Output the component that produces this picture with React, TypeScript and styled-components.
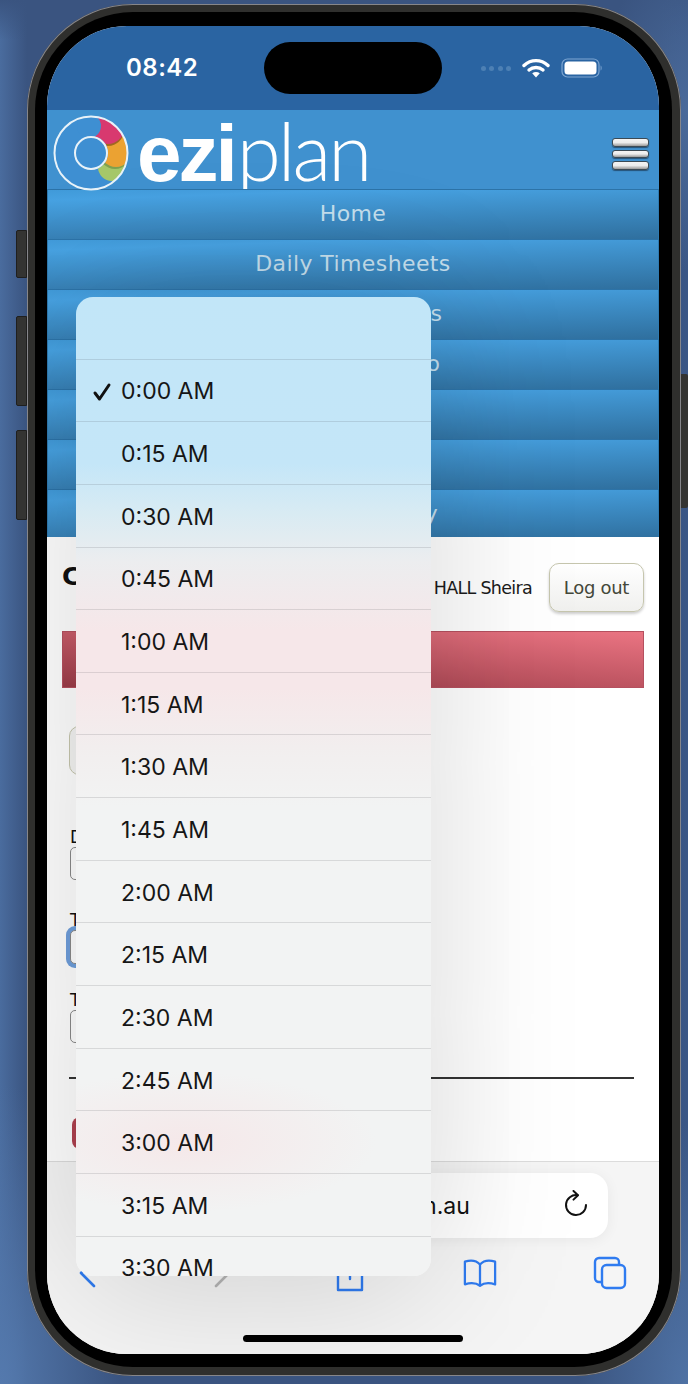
import React from 'react'
import styled, {createGlobalStyle} from 'styled-components'

const navItems = ['Home', 'Daily Timesheets', 'Leave Requests', 'Employees Info', 'Reports', 'Settings', 'Weekly History']

const times = ['0:00 AM', '0:15 AM', '0:30 AM', '0:45 AM', '1:00 AM', '1:15 AM', '1:30 AM', '1:45 AM', '2:00 AM', '2:15 AM', '2:30 AM', '2:45 AM', '3:00 AM', '3:15 AM', '3:30 AM']

const App: React.FC = () => {
    return (
        <Desktop>
            <GlobalStyle />
            <Phone>
                <SideButton $top={226} $height={48} />
                <SideButton $top={312} $height={90} />
                <SideButton $top={426} $height={90} />
                <PowerButton />
                <Bezel>
                    <Screen>
                        <StatusBar>
                            <Clock>08:42</Clock>
                            <StatusIcons>
                                <SignalDots>
                                    <i /><i /><i /><i />
                                </SignalDots>
                                <svg width="28" height="20" viewBox="0 0 28 20">
                                    <path d="M2 7.5C9 1 19 1 26 7.5" fill="none" stroke="#fff" strokeWidth="3.4" strokeLinecap="round" />
                                    <path d="M7 12C11 8.6 17 8.6 21 12" fill="none" stroke="#fff" strokeWidth="3.4" strokeLinecap="round" />
                                    <path d="M10.2 15.2C12.6 13.6 15.4 13.6 17.8 15.2L14 19.4Z" fill="#fff" />
                                </svg>
                                <svg width="42" height="20" viewBox="0 0 42 20">
                                    <rect x="1" y="1" width="37" height="18" rx="5.5" fill="none" stroke="#7ea6d2" strokeWidth="1.2" />
                                    <rect x="3.5" y="3.5" width="32" height="13" rx="3.5" fill="#fff" />
                                    <path d="M39.6 7.5C41 8 41 12 39.6 12.5Z" fill="#7ea6d2" />
                                </svg>
                            </StatusIcons>
                        </StatusBar>
                        <Island />
                        <Header>
                            <Logo width="76" height="76" viewBox="0 0 76 76">
                                <defs>
                                    <clipPath id="ring">
                                        <circle cx="38" cy="38" r="36.5" />
                                    </clipPath>
                                </defs>
                                <circle cx="38" cy="38" r="37" fill="#3e8fd2" />
                                <g clipPath="url(#ring)">
                                    <circle cx="59" cy="52" r="14" fill="#a5c768" />
                                    <circle cx="62" cy="38" r="16" fill="#3a5a20" opacity="0.35" />
                                    <circle cx="63" cy="36" r="16" fill="#eba232" />
                                    <circle cx="55" cy="15" r="16" fill="#5a2a10" opacity="0.5" />
                                    <circle cx="55" cy="13" r="16" fill="#d8396f" />
                                    <circle cx="36" cy="11" r="12" fill="#3e8fd2" />
                                    <circle cx="38" cy="38" r="17" fill="#3e8fd2" />
                                </g>
                                <circle cx="38" cy="38" r="36.5" fill="none" stroke="#e8f2f8" strokeWidth="2" />
                                <circle cx="38" cy="38" r="16" fill="none" stroke="#e8f2f8" strokeWidth="2" />
                            </Logo>
                            <Wordmark>
                                <b>ezi</b><span>plan</span>
                            </Wordmark>
                            <Hamburger>
                                <i /><i /><i />
                            </Hamburger>
                        </Header>
                        <Nav>
                            {navItems.map(item => <NavItem key={item}>{item}</NavItem>)}
                        </Nav>
                        <Page>
                            <TitleRow>
                                <Title>Create Entry</Title>
                                <UserBox>
                                    <UserName>HALL Sheira</UserName>
                                    <LogOut>Log out</LogOut>
                                </UserBox>
                            </TitleRow>
                            <RedBar />
                            <BackButton>Back</BackButton>
                            <Field $top={52}>
                                <FieldLabel>Date</FieldLabel>
                                <Input $height={33} />
                            </Field>
                            <Field $top={30}>
                                <FieldLabel>Time from</FieldLabel>
                                <Input $height={34} $focused />
                            </Field>
                            <Field $top={26}>
                                <FieldLabel>Time to</FieldLabel>
                                <Input $height={33} />
                            </Field>
                            <Rule />
                            <SaveButton>Save</SaveButton>
                        </Page>
                        <Toolbar>
                            <UrlBar>
                                <UrlText>www.eziplan.com.au</UrlText>
                                <Reload width="24" height="28" viewBox="0 0 24 28">
                                    <path d="M13.5 5.2A10 10 0 1 0 22 15" fill="none" stroke="#111" strokeWidth="2" strokeLinecap="round" />
                                    <path d="M9.5 1L14 5.2L9.5 9.6" fill="none" stroke="#111" strokeWidth="2" strokeLinecap="round" strokeLinejoin="round" />
                                </Reload>
                            </UrlBar>
                            <ToolIcons>
                                <ToolSlot $left={23}>
                                    <svg width="20" height="32" viewBox="0 0 20 32">
                                        <path d="M17 3L4 16L17 29" fill="none" stroke="#2f7bf0" strokeWidth="2.6" strokeLinecap="round" strokeLinejoin="round" />
                                    </svg>
                                </ToolSlot>
                                <ToolSlot $left={102}>
                                    <svg width="20" height="32" viewBox="0 0 20 32">
                                        <path d="M3 3L16 16L3 29" fill="none" stroke="#b5b5b5" strokeWidth="2.6" strokeLinecap="round" strokeLinejoin="round" />
                                    </svg>
                                </ToolSlot>
                                <ToolSlot $left={93} $drop={4}>
                                    <svg width="30" height="36" viewBox="0 0 30 36">
                                        <path d="M9 11H3V33H27V11H21M15 22V2M9 7L15 2L21 7" fill="none" stroke="#2f7bf0" strokeWidth="2.4" strokeLinecap="round" strokeLinejoin="round" />
                                    </svg>
                                </ToolSlot>
                                <ToolSlot $left={96}>
                                    <svg width="36" height="30" viewBox="0 0 36 30">
                                        <path d="M18 6C14 1.500 7 1.500 2 3V27C7 25.500 14 25.500 18 28.500C22 25.500 29 25.500 34 27V3C29 1.500 22 1.500 18 6ZM18 6V28.500" fill="none" stroke="#2f7bf0" strokeWidth="2.4" strokeLinejoin="round" />
                                    </svg>
                                </ToolSlot>
                                <ToolSlot $left={96}>
                                    <svg width="34" height="34" viewBox="0 0 34 34">
                                        <path d="M8 26H6A4 4 0 0 1 2 22V6A4 4 0 0 1 6 2H22A4 4 0 0 1 26 6V8" fill="none" stroke="#2f7bf0" strokeWidth="2.4" strokeLinecap="round" />
                                        <rect x="9" y="9" width="23" height="23" rx="4.500" fill="none" stroke="#2f7bf0" strokeWidth="2.4" />
                                    </svg>
                                </ToolSlot>
                            </ToolIcons>
                            <HomeIndicator />
                        </Toolbar>
                        <TimeMenu>
                            <MenuRow />
                            {times.map((time, index) => (
                                <MenuRow key={time}>
                                    {index === 0 && (
                                        <Check width="20" height="20" viewBox="0 0 20 20">
                                            <path d="M3 11L7.500 17L17 3" fill="none" stroke="#111" strokeWidth="3" strokeLinecap="round" strokeLinejoin="round" />
                                        </Check>
                                    )}
                                    {time}
                                </MenuRow>
                            ))}
                        </TimeMenu>
                    </Screen>
                </Bezel>
            </Phone>
        </Desktop>
    )
}

export default App

const GlobalStyle = createGlobalStyle`
    html, body {
        margin: 0;
        padding: 0;
        width: 688px;
        height: 1384px;
        overflow: hidden;
    }
    * {
        box-sizing: border-box;
    }
`

const Desktop = styled.div`
    width: 688px;
    height: 1384px;
    padding: 4px 7px 8px 27px;
    background:
        radial-gradient(ellipse 120px 300px at 0 1384px, #5479ad, transparent),
        radial-gradient(ellipse 110px 260px at 688px 1384px, #4f72a4, transparent),
        radial-gradient(ellipse 90px 160px at 688px 110px, #4a6a9a, transparent),
        linear-gradient(180deg, #3a5480 0, transparent 40px),
        linear-gradient(90deg, #4a6c9e 0, #3a5480 27px, #3a5480 660px, #3b5786 100%);
`

const Phone = styled.div`
    position: relative;
    width: 654px;
    height: 1372px;
    padding: 8px 9px 9px 8px;
    border-radius: 106px;
    background: #2f2f2d;
    box-shadow: inset 0 0 0 1px #86868a;
`

const SideButton = styled.div<{$top: number, $height: number}>`
    position: absolute;
    left: -11px;
    top: ${props => props.$top}px;
    width: 11px;
    height: ${props => props.$height}px;
    background: #343432;
    border: 1px solid #1f1f1e;
    border-radius: 2px 0 0 2px;
`

const PowerButton = styled.div`
    position: absolute;
    right: -7px;
    top: 370px;
    width: 7px;
    height: 134px;
    background: #343432;
    border-radius: 0 2px 2px 0;
`

const Bezel = styled.div`
    width: 100%;
    height: 100%;
    padding: 14px 13px 13px 12px;
    border-radius: 98px;
    background: #000;
`

const Screen = styled.div`
    position: relative;
    display: flex;
    flex-direction: column;
    width: 100%;
    height: 100%;
    border-radius: 80px;
    overflow: hidden;
    background: #fff;
    font-family: "DejaVu Sans", sans-serif;
`

const StatusBar = styled.div`
    display: flex;
    align-items: center;
    justify-content: space-between;
    height: 84px;
    padding: 0 56px 0 79px;
    background: #2a64a2;
    flex-shrink: 0;
`

const Clock = styled.div`
    font-family: Inter, sans-serif;
    font-size: 24px;
    font-weight: 600;
    color: #fff;
    letter-spacing: 0.5px;
    margin-top: -1px;
`

const StatusIcons = styled.div`
    display: flex;
    align-items: center;
    gap: 11px;
    margin-top: -1px;
`

const SignalDots = styled.div`
    display: flex;
    gap: 3.5px;
    margin-top: 2px;
    i {
        width: 5px;
        height: 5px;
        border-radius: 50%;
        background: #4d80b4;
    }
`

const Island = styled.div`
    position: absolute;
    left: 217px;
    top: 16px;
    width: 178px;
    height: 52px;
    border-radius: 26px;
    background: #000;
`

const Header = styled.div`
    display: flex;
    align-items: flex-start;
    height: 79px;
    padding: 5px 10px 0 6px;
    background: #4091cf;
    flex-shrink: 0;
`

const Logo = styled.svg`
    flex-shrink: 0;
    position: relative;
    z-index: 1;
`

const Wordmark = styled.div`
    margin: -11px 0 0 8px;
    color: #fff;
    font-size: 80px;
    line-height: 92px;
    white-space: nowrap;
    b {
        font-family: "Liberation Sans", sans-serif;
        font-weight: 700;
        letter-spacing: -3px;
    }
    span {
        font-family: Lato, sans-serif;
        font-weight: 300;
        letter-spacing: -3px;
        margin-left: 2px;
    }
`

const Hamburger = styled.div`
    display: flex;
    flex-direction: column;
    gap: 3px;
    margin: 23px 0 0 auto;
    i {
        display: block;
        width: 37px;
        height: 8.500px;
        border-radius: 3px;
        border: 1px solid #3b4a55;
        background: linear-gradient(180deg, #f4f4f4 0, #ececec 50%, #9a9a9a 100%);
        box-shadow: 0 1px 1px rgba(20, 40, 60, 0.6);
    }
`

const Nav = styled.div`
    display: flex;
    flex-direction: column;
    height: 348px;
    overflow: hidden;
    flex-shrink: 0;
    background: #3a7fb2;
`

const NavItem = styled.div`
    display: flex;
    align-items: center;
    justify-content: center;
    height: 50px;
    flex-shrink: 0;
    border-top: 1.500px solid #2c73a8;
    border-left: 1px solid #2f7ab0;
    border-right: 1px solid #2f7ab0;
    background: linear-gradient(178deg, #419bda 0, #47a2e2 15%, #2f6f9e 100%);
    color: #c4deec;
    font-size: 22px;
    letter-spacing: 0.400px;
    padding-bottom: 2px;
`

const Page = styled.div`
    flex: 1;
    min-height: 0;
    padding: 26px 15px 0;
    background: #fff;
`

const TitleRow = styled.div`
    display: flex;
    align-items: flex-start;
    justify-content: space-between;
    height: 49px;
`

const Title = styled.h1`
    margin: 2px 0 0;
    font-size: 25px;
    font-weight: 700;
    line-height: 24px;
    color: #111;
`

const UserBox = styled.div`
    display: flex;
    align-items: center;
    gap: 17px;
`

const UserName = styled.span`
    font-size: 17.500px;
    color: #1b1b1b;
    letter-spacing: -0.700px;
`

const LogOut = styled.button`
    width: 95px;
    height: 49px;
    padding: 0;
    border: 1.500px solid #c6c6ae;
    border-radius: 10px;
    background: linear-gradient(180deg, #fff 0, #f0f0ee 100%);
    box-shadow: 0 2px 3px rgba(0, 0, 0, 0.2);
    color: #44483a;
    font-family: inherit;
    font-size: 18px;
    letter-spacing: -0.300px;
`

const RedBar = styled.div`
    height: 57px;
    margin-top: 19px;
    border: 1px solid #b5505f;
    background: linear-gradient(184deg, #ea7482 0, #9c3c48 100%);
`

const BackButton = styled.button`
    display: block;
    width: 120px;
    height: 49px;
    margin: 38px 0 0 7px;
    border: 1.500px solid #c6c6ae;
    border-radius: 10px;
    background: #f4f4f2;
    font-family: inherit;
    font-size: 18px;
`

const Field = styled.div<{$top: number}>`
    margin: ${props => props.$top}px 0 0 8px;
`

const FieldLabel = styled.div`
    font-size: 17px;
    line-height: 20px;
    color: #111;
`

const Input = styled.div<{$height: number, $focused?: boolean}>`
    width: 220px;
    height: ${props => props.$height}px;
    border: 1.500px solid #8a8a8a;
    border-radius: 5px;
    background: #fff;
    box-shadow: ${props => props.$focused ? '0 0 0 4px #6f9fdc' : 'none'};
`

const Rule = styled.div`
    height: 1.500px;
    margin: 34px 10px 0 7px;
    background: #333;
`

const SaveButton = styled.button`
    display: block;
    width: 100px;
    height: 32px;
    margin: 38px 0 0 10px;
    border: none;
    border-radius: 8px;
    background: #b0414f;
    color: #fff;
    font-family: inherit;
`

const Toolbar = styled.div`
    display: flex;
    flex-direction: column;
    position: relative;
    height: 193px;
    flex-shrink: 0;
    border-top: 1.500px solid #dcdcdc;
    background: #f5f5f5;
`

const UrlBar = styled.div`
    display: flex;
    align-items: center;
    justify-content: center;
    position: relative;
    height: 65px;
    margin: 11px 51px 0;
    padding-left: 8px;
    border-radius: 18px;
    background: #fff;
    box-shadow: 0 2px 14px rgba(0, 0, 0, 0.06);
`

const UrlText = styled.span`
    font-family: Inter, sans-serif;
    font-size: 23px;
    color: #111;
`

const Reload = styled.svg`
    position: absolute;
    right: 20px;
    top: 17px;
`

const ToolIcons = styled.div`
    display: flex;
    align-items: center;
    height: 40px;
    margin-top: 15px;
`

const ToolSlot = styled.div<{$left: number, $drop?: number}>`
    display: flex;
    justify-content: center;
    width: 34px;
    margin-left: ${props => props.$left}px;
    margin-top: ${props => props.$drop || 0}px;
`

const HomeIndicator = styled.div`
    position: absolute;
    left: 196px;
    bottom: 12px;
    width: 220px;
    height: 7px;
    border-radius: 4px;
    background: #000;
`

const TimeMenu = styled.div`
    position: absolute;
    left: 29px;
    top: 271px;
    width: 355px;
    height: 979px;
    border-radius: 17px;
    overflow: hidden;
    font-family: Inter, sans-serif;
    font-size: 23px;
    color: #161616;
    box-shadow: 0 10px 150px rgba(0, 0, 0, 0.17);
    background:
        radial-gradient(ellipse 190px 70px at 110px 845px, #f5e8e9, transparent),
        linear-gradient(180deg, #c2e6f8 0, #c4e6f8 17%, #d8ebf3 22%, #ecedef 27%, #f6e7e9 34%, #f6e7e9 40%, #f2eeee 46%, #f2f3f3 52%, #f2f3f3 100%);
`

const MenuRow = styled.div`
    display: flex;
    align-items: center;
    position: relative;
    height: 62.650px;
    padding: 2px 0 0 45px;
    border-bottom: 1px solid rgba(60, 60, 67, 0.14);
`

const Check = styled.svg`
    position: absolute;
    left: 16px;
    top: 22px;
`
